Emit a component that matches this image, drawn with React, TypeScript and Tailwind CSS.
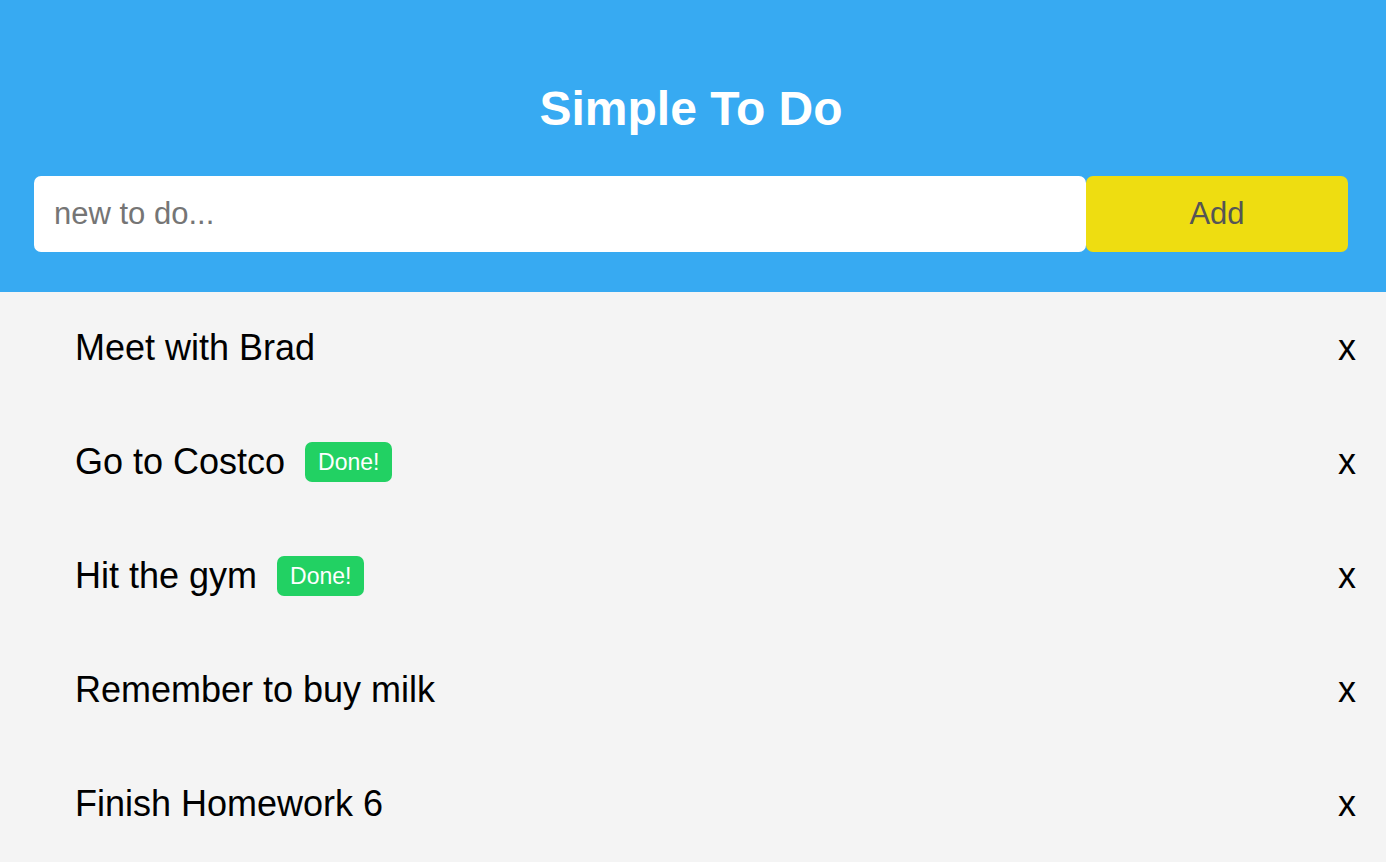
import React, { useState } from "react";

type Todo = {
  id: number;
  text: string;
  done: boolean;
};

const initialTodos: Todo[] = [
  { id: 1, text: "Meet with Brad", done: false },
  { id: 2, text: "Go to Costco", done: true },
  { id: 3, text: "Hit the gym", done: true },
  { id: 4, text: "Remember to buy milk", done: false },
  { id: 5, text: "Finish Homework 6", done: false },
];

const App = () => {
  const [todos, setTodos] = useState<Todo[]>(initialTodos);
  const [draft, setDraft] = useState<string>("");

  const addTodo = (e: React.FormEvent) => {
    e.preventDefault();
    if (!draft.trim()) return;
    setTodos([...todos, { id: Date.now(), text: draft.trim(), done: false }]);
    setDraft("");
  };

  const toggleTodo = (id: number) => {
    setTodos(todos.map((t) => (t.id === id ? { ...t, done: !t.done } : t)));
  };

  const removeTodo = (id: number) => {
    setTodos(todos.filter((t) => t.id !== id));
  };

  return (
    <div className="min-h-screen bg-[#f4f4f4] font-['Liberation_Sans',Arial,sans-serif]">
      {/* Header */}
      <header className="bg-[#37aaf2] pt-[85px] pb-[40px] pl-[34px] pr-[38px]">
        <h1 className="text-center text-[48px] leading-[48px] font-bold text-white">
          Simple To Do
        </h1>
        <form onSubmit={addTodo} className="flex mt-[43px] h-[76px]">
          <input
            value={draft}
            onChange={(e) => setDraft(e.target.value)}
            placeholder="new to do..."
            className="flex-1 min-w-0 bg-white rounded-[7px] pl-[20px] text-[31px] text-[#333] placeholder:text-[#757575] outline-none"
          />
          <button
            type="submit"
            className="w-[262px] bg-[#eedd11] rounded-[7px] text-[31px] text-[#555]"
          >
            Add
          </button>
        </form>
      </header>

      {/* Todo list */}
      <ul>
        {todos.map((todo) => (
          <li
            key={todo.id}
            className="flex items-center justify-between h-[114px] pb-[2px] pl-[75px] pr-[30px] text-[36px] text-black"
          >
            <div
              className="flex items-center cursor-pointer"
              onClick={() => toggleTodo(todo.id)}
            >
              <span>{todo.text}</span>
              {todo.done && (
                <span className="ml-5 flex items-center h-[40px] px-[13px] rounded-[7px] bg-[#22d163] text-white text-[23px]">
                  Done!
                </span>
              )}
            </div>
            <button onClick={() => removeTodo(todo.id)} className="text-[36px]">
              x
            </button>
          </li>
        ))}
      </ul>
    </div>
  );
};

export default App;
